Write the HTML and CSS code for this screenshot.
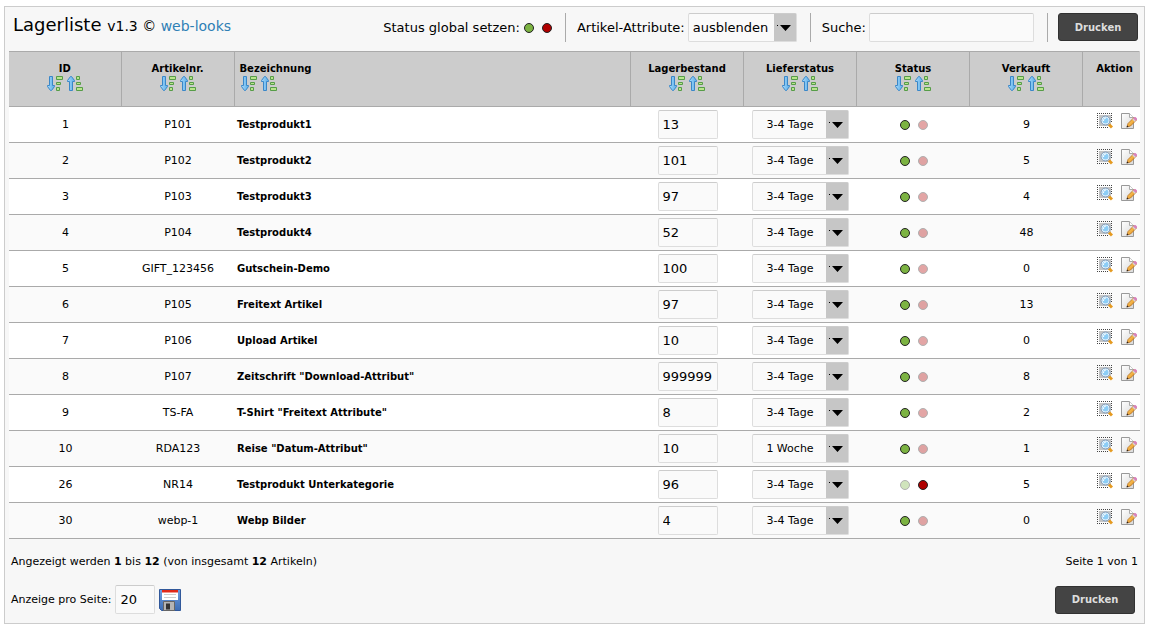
FILE: index.html
```
<!DOCTYPE html>
<html lang="de">
<head>
<meta charset="utf-8">
<title>Lagerliste</title>
<link rel="stylesheet" href="styles.css">
</head>
<body>
<svg class="sprite" aria-hidden="true">
  <defs>
    <linearGradient id="blue" x1="0" x2="1" y1="0" y2="0"><stop offset="0" stop-color="#a5d8fa"/><stop offset="1" stop-color="#5aaee8"/></linearGradient>
    <linearGradient id="pencil" x1="0" x2="1" y1="0" y2="1"><stop offset="0" stop-color="#ffd873"/><stop offset="1" stop-color="#e58a14"/></linearGradient>
    <linearGradient id="paper" x1="0" x2="1" y1="0" y2="1"><stop offset="0" stop-color="#ffffff"/><stop offset="1" stop-color="#d9d9d9"/></linearGradient>
    <linearGradient id="disk" x1="0" x2="0" y1="0" y2="1"><stop offset="0" stop-color="#6f9ee0"/><stop offset="1" stop-color="#3c6db5"/></linearGradient>
  </defs>
  <symbol id="down" viewBox="0 0 16 16">
    <path d="M2.500 .5h3v9h2v1l-3 4h-1l-3-4v-1h2z" fill="url(#blue)" stroke="#3a87c8"/>
    <g fill="#b9e58c" stroke="#569c48"><path d="M9.500 .5h6v3h-6zM9.500 6.500h4v2h-4zM9.500 11.500h3v3h-3z"/></g>
  </symbol>
  <symbol id="up" viewBox="0 0 16 16">
    <path d="M2.500 14.500h3v-9h2v-1l-3-4h-1l-3 4v1h2z" fill="url(#blue)" stroke="#3a87c8"/>
    <g fill="#b9e58c" stroke="#569c48"><path d="M9.500 .5h3v3h-3zM9.500 6.500h4v2h-4zM9.500 11.500h6v3h-6z"/></g>
  </symbol>
  <symbol id="view" viewBox="0 0 16 16">
    <path d="M2 2h12v11H2z" fill="#c4c4c4"/>
    <path d="M0 .5h15M0 14.500h11M.5 0v15M14.500 0v10" fill="none" stroke="#444" stroke-dasharray="1 1"/>
    <path d="M12 11.500l3 3" stroke="#e59a20" stroke-width="3"/>
    <circle cx="8.500" cy="7.500" r="4.300" fill="#e8f4fc"/>
    <circle cx="8.500" cy="7.500" r="3" fill="#8ccdf6"/>
    <circle cx="8.500" cy="7.500" r="4.500" fill="none" stroke="#7d9cbd"/>
    <path d="M6.500 8c0-2 1-3 2.500-3" fill="none" stroke="#fff"/>
  </symbol>
  <symbol id="edit" viewBox="0 0 16 16">
    <path d="M.5 .5h8l4 4v11H.5z" fill="url(#paper)" stroke="#999"/>
    <path d="M8.500 .5v4h4" fill="#fff" stroke="#aaa"/>
    <path d="M6 14l1-3.500L13 4.500l2.500 2.500L9.500 13z" fill="url(#pencil)" stroke="#b26a1d" stroke-width=".8"/>
    <path d="M12 5.500l1.500-1.500h1l1.500 1.500v1L14.500 8z" fill="#d882bd"/>
    <path d="M11.300 6.300l.9-.9 2.600 2.600-.9.900z" fill="#d5d5e0"/>
    <path d="M5.500 14.500l.7-2 1.300 1.300z" fill="#222"/>
  </symbol>
  <symbol id="save" viewBox="0 0 22 22">
    <path d="M.5 .5h21v21H2.500l-2-2z" fill="url(#disk)" stroke="#31589a"/>
    <path d="M3 1h16v10H3z" fill="#fff"/><path d="M3 1h16v2.500H3z" fill="#e02818"/>
    <path d="M5 5.500h12M5 8.500h12" stroke="#ccc"/>
    <path d="M4.500 12.500h11v9h-11z" fill="#b4b4b4" stroke="#666"/>
    <path d="M7 14.500h4v6H7z" fill="#333"/>
  </symbol>
</svg>

<main class="panel">
  <header class="toolbar">
    <h1 class="title">Lagerliste <small>v1.3 © <a href="#">web-looks</a></small></h1>
    <div class="group status-all"><span>Status global setzen:</span>
      <button class="dot green" aria-label="Alle aktivieren"></button><button class="dot red" aria-label="Alle deaktivieren"></button></div>
    <div class="group attributes"><label for="attr">Artikel-Attribute:</label><select id="attr" class="select"><option>ausblenden</option><option>einblenden</option></select></div>
    <div class="group search"><label for="q">Suche:</label><input id="q" class="field" type="text"></div>
    <div class="group print"><button class="button">Drucken</button></div>
  </header>

  <table class="list">
    <colgroup><col class="c-id"><col class="c-std"><col><col class="c-std"><col class="c-std"><col class="c-std"><col class="c-std"><col class="c-action"></colgroup>
    <thead>
      <tr>
        <th>ID<span class="sort"><a href="#" aria-label="Absteigend"><svg><use href="#down"/></svg></a><a href="#" aria-label="Aufsteigend"><svg><use href="#up"/></svg></a></span></th>
        <th>Artikelnr.<span class="sort"><a href="#" aria-label="Absteigend"><svg><use href="#down"/></svg></a><a href="#" aria-label="Aufsteigend"><svg><use href="#up"/></svg></a></span></th>
        <th class="name">Bezeichnung<span class="sort"><a href="#" aria-label="Absteigend"><svg><use href="#down"/></svg></a><a href="#" aria-label="Aufsteigend"><svg><use href="#up"/></svg></a></span></th>
        <th>Lagerbestand<span class="sort"><a href="#" aria-label="Absteigend"><svg><use href="#down"/></svg></a><a href="#" aria-label="Aufsteigend"><svg><use href="#up"/></svg></a></span></th>
        <th>Lieferstatus<span class="sort"><a href="#" aria-label="Absteigend"><svg><use href="#down"/></svg></a><a href="#" aria-label="Aufsteigend"><svg><use href="#up"/></svg></a></span></th>
        <th>Status<span class="sort"><a href="#" aria-label="Absteigend"><svg><use href="#down"/></svg></a><a href="#" aria-label="Aufsteigend"><svg><use href="#up"/></svg></a></span></th>
        <th>Verkauft<span class="sort"><a href="#" aria-label="Absteigend"><svg><use href="#down"/></svg></a><a href="#" aria-label="Aufsteigend"><svg><use href="#up"/></svg></a></span></th>
        <th class="action">Aktion</th>
      </tr>
    </thead>
    <tbody>
      <tr><td>1</td><td>P101</td><td class="name">Testprodukt1</td><td><input class="field stock" aria-label="Lagerbestand" value="13"></td><td><select class="select ship" aria-label="Lieferstatus"><option>3-4 Tage</option></select></td><td><span class="dots"><button class="dot green" aria-label="Aktiv"></button><button class="dot red off" aria-label="Inaktiv"></button></span></td><td>9</td><td><span class="tools"><a href="#" aria-label="Ansehen"><svg><use href="#view"/></svg></a><a href="#" aria-label="Bearbeiten"><svg><use href="#edit"/></svg></a></span></td></tr>
      <tr><td>2</td><td>P102</td><td class="name">Testprodukt2</td><td><input class="field stock" aria-label="Lagerbestand" value="101"></td><td><select class="select ship" aria-label="Lieferstatus"><option>3-4 Tage</option></select></td><td><span class="dots"><button class="dot green" aria-label="Aktiv"></button><button class="dot red off" aria-label="Inaktiv"></button></span></td><td>5</td><td><span class="tools"><a href="#" aria-label="Ansehen"><svg><use href="#view"/></svg></a><a href="#" aria-label="Bearbeiten"><svg><use href="#edit"/></svg></a></span></td></tr>
      <tr><td>3</td><td>P103</td><td class="name">Testprodukt3</td><td><input class="field stock" aria-label="Lagerbestand" value="97"></td><td><select class="select ship" aria-label="Lieferstatus"><option>3-4 Tage</option></select></td><td><span class="dots"><button class="dot green" aria-label="Aktiv"></button><button class="dot red off" aria-label="Inaktiv"></button></span></td><td>4</td><td><span class="tools"><a href="#" aria-label="Ansehen"><svg><use href="#view"/></svg></a><a href="#" aria-label="Bearbeiten"><svg><use href="#edit"/></svg></a></span></td></tr>
      <tr><td>4</td><td>P104</td><td class="name">Testprodukt4</td><td><input class="field stock" aria-label="Lagerbestand" value="52"></td><td><select class="select ship" aria-label="Lieferstatus"><option>3-4 Tage</option></select></td><td><span class="dots"><button class="dot green" aria-label="Aktiv"></button><button class="dot red off" aria-label="Inaktiv"></button></span></td><td>48</td><td><span class="tools"><a href="#" aria-label="Ansehen"><svg><use href="#view"/></svg></a><a href="#" aria-label="Bearbeiten"><svg><use href="#edit"/></svg></a></span></td></tr>
      <tr><td>5</td><td>GIFT_123456</td><td class="name">Gutschein-Demo</td><td><input class="field stock" aria-label="Lagerbestand" value="100"></td><td><select class="select ship" aria-label="Lieferstatus"><option>3-4 Tage</option></select></td><td><span class="dots"><button class="dot green" aria-label="Aktiv"></button><button class="dot red off" aria-label="Inaktiv"></button></span></td><td>0</td><td><span class="tools"><a href="#" aria-label="Ansehen"><svg><use href="#view"/></svg></a><a href="#" aria-label="Bearbeiten"><svg><use href="#edit"/></svg></a></span></td></tr>
      <tr><td>6</td><td>P105</td><td class="name">Freitext Artikel</td><td><input class="field stock" aria-label="Lagerbestand" value="97"></td><td><select class="select ship" aria-label="Lieferstatus"><option>3-4 Tage</option></select></td><td><span class="dots"><button class="dot green" aria-label="Aktiv"></button><button class="dot red off" aria-label="Inaktiv"></button></span></td><td>13</td><td><span class="tools"><a href="#" aria-label="Ansehen"><svg><use href="#view"/></svg></a><a href="#" aria-label="Bearbeiten"><svg><use href="#edit"/></svg></a></span></td></tr>
      <tr><td>7</td><td>P106</td><td class="name">Upload Artikel</td><td><input class="field stock" aria-label="Lagerbestand" value="10"></td><td><select class="select ship" aria-label="Lieferstatus"><option>3-4 Tage</option></select></td><td><span class="dots"><button class="dot green" aria-label="Aktiv"></button><button class="dot red off" aria-label="Inaktiv"></button></span></td><td>0</td><td><span class="tools"><a href="#" aria-label="Ansehen"><svg><use href="#view"/></svg></a><a href="#" aria-label="Bearbeiten"><svg><use href="#edit"/></svg></a></span></td></tr>
      <tr><td>8</td><td>P107</td><td class="name">Zeitschrift "Download-Attribut"</td><td><input class="field stock" aria-label="Lagerbestand" value="999999"></td><td><select class="select ship" aria-label="Lieferstatus"><option>3-4 Tage</option></select></td><td><span class="dots"><button class="dot green" aria-label="Aktiv"></button><button class="dot red off" aria-label="Inaktiv"></button></span></td><td>8</td><td><span class="tools"><a href="#" aria-label="Ansehen"><svg><use href="#view"/></svg></a><a href="#" aria-label="Bearbeiten"><svg><use href="#edit"/></svg></a></span></td></tr>
      <tr><td>9</td><td>TS-FA</td><td class="name">T-Shirt "Freitext Attribute"</td><td><input class="field stock" aria-label="Lagerbestand" value="8"></td><td><select class="select ship" aria-label="Lieferstatus"><option>3-4 Tage</option></select></td><td><span class="dots"><button class="dot green" aria-label="Aktiv"></button><button class="dot red off" aria-label="Inaktiv"></button></span></td><td>2</td><td><span class="tools"><a href="#" aria-label="Ansehen"><svg><use href="#view"/></svg></a><a href="#" aria-label="Bearbeiten"><svg><use href="#edit"/></svg></a></span></td></tr>
      <tr><td>10</td><td>RDA123</td><td class="name">Reise "Datum-Attribut"</td><td><input class="field stock" aria-label="Lagerbestand" value="10"></td><td><select class="select ship" aria-label="Lieferstatus"><option>1 Woche</option></select></td><td><span class="dots"><button class="dot green" aria-label="Aktiv"></button><button class="dot red off" aria-label="Inaktiv"></button></span></td><td>1</td><td><span class="tools"><a href="#" aria-label="Ansehen"><svg><use href="#view"/></svg></a><a href="#" aria-label="Bearbeiten"><svg><use href="#edit"/></svg></a></span></td></tr>
      <tr><td>26</td><td>NR14</td><td class="name">Testprodukt Unterkategorie</td><td><input class="field stock" aria-label="Lagerbestand" value="96"></td><td><select class="select ship" aria-label="Lieferstatus"><option>3-4 Tage</option></select></td><td><span class="dots"><button class="dot green off" aria-label="Aktiv"></button><button class="dot red" aria-label="Inaktiv"></button></span></td><td>5</td><td><span class="tools"><a href="#" aria-label="Ansehen"><svg><use href="#view"/></svg></a><a href="#" aria-label="Bearbeiten"><svg><use href="#edit"/></svg></a></span></td></tr>
      <tr><td>30</td><td>webp-1</td><td class="name">Webp Bilder</td><td><input class="field stock" aria-label="Lagerbestand" value="4"></td><td><select class="select ship" aria-label="Lieferstatus"><option>3-4 Tage</option></select></td><td><span class="dots"><button class="dot green" aria-label="Aktiv"></button><button class="dot red off" aria-label="Inaktiv"></button></span></td><td>0</td><td><span class="tools"><a href="#" aria-label="Ansehen"><svg><use href="#view"/></svg></a><a href="#" aria-label="Bearbeiten"><svg><use href="#edit"/></svg></a></span></td></tr>
    </tbody>
  </table>

  <div class="summary"><span>Angezeigt werden <b>1</b> bis <b>12</b> (von insgesamt <b>12</b> Artikeln)</span><span>Seite 1 von 1</span></div>
  <footer class="footer">
    <div class="per-page"><label for="n">Anzeige pro Seite:</label><input id="n" class="field count" value="20"><button class="save" aria-label="Speichern"><svg><use href="#save"/></svg></button></div>
    <button class="button">Drucken</button>
  </footer>
</main>
</body>
</html>
```
FILE: styles.css
```
* { box-sizing: border-box; }
body {
  margin: 6px 4px;
  background: #fff;
  color: #000;
  font: 11px/14px Verdana, "DejaVu Sans", sans-serif;
}
a { color: #2f7fb5; text-decoration: none; }
button, input, select { margin: 0; font-family: inherit; color: inherit; }
.sprite { position: absolute; width: 0; height: 0; }
.panel {
  padding: 4px;
  border: 1px solid #ccc;
  background: #f7f7f7;
}

.toolbar {
  display: flex;
  align-items: flex-start;
  height: 40px;
  padding: 2px 2px 0 4px;
  font-size: 13px;
}
.title {
  margin: 0 auto 0 0;
  font-size: 18px;
  font-weight: 400;
  line-height: 24px;
  white-space: nowrap;
}
.title small { font-size: 14px; }
.group { display: flex; align-items: center; height: 29px; white-space: nowrap; }
.group + .group { border-left: 1px solid #aaa; }
.status-all { gap: 8px; padding-right: 13px; }
.status-all span { margin-right: -4px; }
.attributes { gap: 3px; padding: 0 13px 0 11px; }
.search { gap: 3px; padding: 0 13px 0 11px; }
.print { align-items: flex-start; padding-left: 10px; }

.field, .select {
  height: 29px;
  border: 1px solid #ddd;
  border-top-color: #ccc;
  border-radius: 2px;
  background-color: #fafafa;
  font-size: 13px;
}
.field { width: 165px; padding: 0 4px; }
.stock { display: block; width: 60px; margin: 0 auto; }
.count { width: 40px; }
.select {
  width: 109px;
  padding: 0 24px 0 4px;
  appearance: none;
  background-image:
    url("data:image/svg+xml,%3Csvg xmlns='http://www.w3.org/2000/svg' width='23' height='29'%3E%3Cpath fill='%23c6c6c6' d='M0 0h23v29H0z'/%3E%3Cpath d='M6 12h11l-5.500 6zM3 12h1v1H3z'/%3E%3C/svg%3E");
  background-origin: border-box;
  background-position: right center;
  background-repeat: no-repeat;
}
.ship { display: block; width: 97px; margin: 0 auto; padding: 0 21px 0 0; font-size: 11px; text-align: center; text-align-last: center; }
.button {
  width: 80px;
  height: 28px;
  padding: 0;
  border: 1px solid #313131;
  border-radius: 3px;
  background: #444;
  color: #ddd;
  font-size: 10px;
  font-weight: 700;
}
.dot { width: 10px; height: 10px; padding: 0; border: 1px solid #222; border-radius: 50%; }
.green { background: #7cb342; }
.red { background: #b00000; }
.off { opacity: .35; }
.dots { display: flex; justify-content: center; gap: 8px; }

.list { width: 100%; table-layout: fixed; border-collapse: collapse; }
.c-id { width: 112px; }
.c-std { width: 113px; }
.c-action { width: 57px; }
th {
  height: 55px;
  padding: 10px 5px;
  border: 1px solid #aaa;
  border-left-width: 0;
  background: #ccc;
  font-size: 10px;
  vertical-align: top;
}
th:last-child { border-right-color: #ccc; }
td { height: 36px; padding: 0 0 0 1px; border-bottom: 1px solid #aaa; text-align: center; }
tbody tr { background: #fff; }
tbody tr:nth-child(even) { background: #fafafa; }
.list .name { font-size: 10px; font-weight: 700; text-align: left; }
td.name { padding-left: 3px; }
.sort { display: flex; justify-content: center; gap: 4px; }
.name .sort { justify-content: flex-start; padding-left: 1px; }
.sort svg, .tools svg { display: block; width: 16px; height: 16px; }
.tools { display: flex; justify-content: flex-end; gap: 8px; padding: 0 3px 8px 0; }
th.action { padding-left: 7px; padding-right: 0; }

.summary { display: flex; justify-content: space-between; padding: 16px 2px 0; }
.footer { display: flex; align-items: center; justify-content: space-between; padding: 16px 5px 5px 2px; }
.per-page { display: flex; align-items: center; gap: 4px; }
.save { padding: 0; border: 0; background: none; }
.save svg { display: block; width: 22px; height: 22px; }
```
